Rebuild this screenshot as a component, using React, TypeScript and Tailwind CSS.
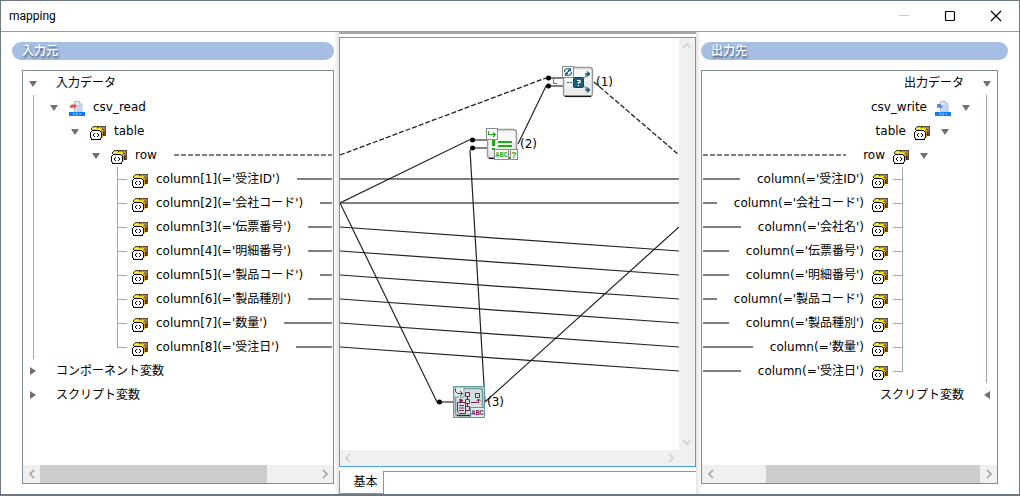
import type { ReactNode } from "react";

type Leaf = string;

const leftColumns: Leaf[] = [
  "column[1](='受注ID')",
  "column[2](='会社コード')",
  "column[3](='伝票番号')",
  "column[4](='明細番号')",
  "column[5](='製品コード')",
  "column[6](='製品種別')",
  "column[7](='数量')",
  "column[8](='受注日')",
];

const rightColumns: Leaf[] = [
  "column(='受注ID')",
  "column(='会社コード')",
  "column(='会社名')",
  "column(='伝票番号')",
  "column(='明細番号')",
  "column(='製品コード')",
  "column(='製品種別')",
  "column(='数量')",
  "column(='受注日')",
];

function FolderIcon() {
  return (
    <svg viewBox="0 0 16 15" className="h-[15px] w-4 shrink-0" shapeRendering="crispEdges" aria-hidden="true">
      <rect x="6" y="1" width="10" height="10" fill="#5f4b36" />
      <rect x="8" y="2" width="7" height="8" fill="#9c8b74" />
      <path d="M11 4h3v1h-3zM13 6h2v4h-2z" fill="#6d5030" />
      <path d="M1 3h1V2h1V1h4v1h1v1h3v2H1z" fill="#4a3d08" />
      <path d="M2 3h1V2h4v1h5v3H2z" fill="#ecd51c" />
      <path d="M3 3h3v1H3zM7 4h4v1H7z" fill="#fff48a" />
      <path d="M11 4h1v1h1v7h-1V6h-1z" fill="#d9a514" />
      <path d="M13 7h1v4h-1z" fill="#3a2604" />
      <path d="M2 5h8v1h1v1h1v6h-1v2H1v-2H0V7h1V6h1z" fill="#000" />
      <path d="M2 6h8v1h1v6h-1v1H2v-1H1V7h1z" fill="#fff" />
      <path d="M4 8h1v1H4zM3 9h1v2H3zM4 11h1v1H4zM7 8h1v1H7zM8 9h1v2H8zM7 11h1v1H7z" fill="#000" />
    </svg>
  );
}

function CsvIcon({ write }: { write?: boolean }) {
  return (
    <svg viewBox="0 0 16 15" className="h-[15px] w-4 shrink-0" aria-hidden="true">
      <path d="M5.500.5h5l2.500 2.500V11h-7.500z" fill="#dfe8f7" stroke="#a9bcd8" />
      <path d="M10.500.5v2.500h2.500" fill="#fff" stroke="#a9bcd8" />
      <path d="M8 5h4M8 7h4M7 9h5" stroke="#a8c0e2" />
      {write ? (
        <path d="M2 3h4v1.500h2L6.500 8 4 6.500 2 7z" fill="#5b8ccf" />
      ) : (
        <path d="M1 7V5l2-1.500h2V2.500L8 5 5 8V6.500z" fill="#d5564d" />
      )}
      <rect y="11" width="16" height="4" fill="#0a7bf2" />
      <path d="M6 12H4.500v2H6M8.500 12H7v1h1.500v1H7M10 12l1 2 1-2" fill="none" stroke="#a9d2ff" strokeWidth=".6" />
    </svg>
  );
}

function Toggle({ open, mirror, label }: { open: boolean; mirror: boolean; label: string }) {
  return (
    <button type="button" aria-label={label} aria-expanded={open} className="flex w-2 shrink-0 justify-center">
      {open ? (
        <svg viewBox="0 0 8 6" className="mt-0.5 h-1.5 w-2">
          <path d="M0 0h8L4 6z" fill="#707070" />
        </svg>
      ) : (
        <svg viewBox="0 0 6 8" className="h-2 w-1.5">
          <path d={mirror ? "M6 0v8L0 4z" : "M0 0v8l6-4z"} fill="#707070" />
        </svg>
      )}
    </button>
  );
}

function Row({
  label,
  indent,
  open = true,
  mirror,
  icon,
  dashed,
}: {
  label: string;
  indent: string;
  open?: boolean;
  mirror: boolean;
  icon?: ReactNode;
  dashed?: boolean;
}) {
  return (
    <div className={`flex h-6 items-center ${mirror ? "flex-row-reverse" : ""} ${indent}`}>
      <Toggle open={open} mirror={mirror} label={label} />
      {icon ? <span className="mx-[11px] mt-0.5 w-4 shrink-0">{icon}</span> : <span className="w-[19px] shrink-0" />}
      <span className={`whitespace-nowrap ${icon ? (mirror ? "-mr-[3px]" : "-ml-[3px]") : ""}`}>{label}</span>
      {dashed && (
        <span
          className={`h-0.5 flex-1 bg-[repeating-linear-gradient(90deg,#808080_0_5px,transparent_5px_7px)] ${
            mirror ? "mr-[17px] ml-px" : "mr-px ml-[17px]"
          }`}
        />
      )}
    </div>
  );
}

function LeafRow({ label, last, mirror }: { label: string; last: boolean; mirror: boolean }) {
  const side = mirror ? "border-r" : "border-l";
  return (
    <li className={`flex h-6 items-center ${mirror ? "flex-row-reverse pr-[83px]" : "pl-[83px]"}`}>
      <span className="flex w-2.5 shrink-0 flex-col self-stretch">
        <span className={`h-[13px] border-b border-[#a0a8b4] ${side}`} />
        <span className={`flex-1 border-[#a0a8b4] ${last ? "" : side}`} />
      </span>
      <span className="mx-[5px] mt-0.5 shrink-0">
        <FolderIcon />
      </span>
      <span className={`whitespace-nowrap ${mirror ? "mr-[3px]" : "ml-[3px]"}`}>{label}</span>
      <span className={`h-0.5 flex-1 bg-[#808080] ${mirror ? "mr-[17px] ml-px" : "mr-px ml-[17px]"}`} />
    </li>
  );
}

function Tree({
  root,
  file,
  columns,
  others,
  mirror = false,
}: {
  root: string;
  file: string;
  columns: Leaf[];
  others: string[];
  mirror?: boolean;
}) {
  return (
    <ul className="flex-1">
      <li>
        <Row label={root} indent={mirror ? "pr-1.5" : "pl-1.5"} mirror={mirror} />
        <div className={`border-[#a0a8b4] ${mirror ? "mr-2.5 border-r" : "ml-2.5 border-l"}`}>
          <Row label={file} indent={mirror ? "pr-4" : "pl-4"} mirror={mirror} icon={<CsvIcon write={mirror} />} />
          <Row label="table" indent={mirror ? "pr-[37px]" : "pl-[37px]"} mirror={mirror} icon={<FolderIcon />} />
          <Row label="row" indent={mirror ? "pr-[58px]" : "pl-[58px]"} mirror={mirror} icon={<FolderIcon />} dashed />
          <ul>
            {columns.map((c, i) => (
              <LeafRow key={c} label={c} last={i === columns.length - 1} mirror={mirror} />
            ))}
          </ul>
        </div>
      </li>
      {others.map((o) => (
        <li key={o}>
          <Row label={o} indent={mirror ? "pr-1.5" : "pl-1.5"} open={false} mirror={mirror} />
        </li>
      ))}
    </ul>
  );
}

function Chevron({ d, label, className }: { d: string; label: string; className: string }) {
  return (
    <button type="button" aria-label={label} className={`flex shrink-0 items-center justify-center ${className}`}>
      <svg viewBox="0 0 10 10" className="size-2.5">
        <path d={d} fill="none" stroke="currentColor" strokeWidth="1.6" />
      </svg>
    </button>
  );
}

const LEFT = "M7 1L3 5l4 4";
const RIGHT = "M3 1l4 4-4 4";
const UP = "M1 7l4-4 4 4";
const DOWN = "M1 3l4 4 4-4";

function TreeScroll({ parts }: { parts: string[] }) {
  return (
    <div className="flex h-[18px] bg-[#f0f0f0] text-[#a3a3a3]">
      <Chevron d={LEFT} label="左へスクロール" className="w-[17px]" />
      <div className={parts[0]} />
      <div className={`bg-[#cdcdcd] ${parts[1]}`} />
      <div className={parts[2]} />
      <Chevron d={RIGHT} label="右へスクロール" className="w-[17px]" />
    </div>
  );
}

function PanelTitle({ children }: { children: ReactNode }) {
  return (
    <h2 className="h-[18px] rounded-full bg-[#a5bee1] pl-2.5 text-[12px] leading-[18px] font-medium text-white [text-shadow:1px_2px_2px_#4a5a70]">
      {children}
    </h2>
  );
}

function NodeFrame() {
  return (
    <>
      <rect x="1.500" y="1.500" width="29" height="29" rx="3" fill="#ececec" stroke="#9a9a9a" strokeWidth="1.400" />
      <path d="M3 4h26v10Q16 18 3 22z" fill="#f7f7f7" />
      <path d="M3 30.300h26" stroke="#111" strokeWidth="1.300" />
    </>
  );
}

function BranchIcon() {
  return (
    <svg viewBox="0 0 32 32" className="size-8">
      <NodeFrame />
      <path d="M5 16.500h7M21 13l5-5M21 19l5 5" stroke="#1f5f7d" strokeWidth="1.200" strokeDasharray="2 1" />
      <path d="M23 8h4M25 5.500L27.500 8 25 10.500M23 24h4M25 21.500l2.500 2.500-2.500 2.500" fill="none" stroke="#1f5f7d" strokeWidth="1.400" />
      <rect x="11.500" y="11.500" width="10" height="10" rx="1" fill="#1f5f7d" stroke="#134358" />
      <path d="M15 14.500h3v2h-1.500v1.500M16.500 19v1.200" fill="none" stroke="#fff" strokeWidth="1.200" />
      <rect x=".5" y=".5" width="11" height="11" fill="#fff" stroke="#8a8a8a" />
      <path d="M2.500 6q0-3.500 4-3.500L8 4M9.500 6q0 3.500-4 3.500L4 8M8.500 2v2.500H6M3.500 10V7.500H6M4 7l4-2.500" fill="none" stroke="#1f5f7d" strokeWidth="1.200" />
    </svg>
  );
}

function EqualsIcon() {
  return (
    <svg viewBox="0 0 32 32" className="size-8">
      <NodeFrame />
      <g fill="#1fae12">
        <rect x="6" y="12" width="3" height="6" />
        <rect x="6" y="20" width="3" height="2" />
        <rect x="12" y="13" width="14" height="2" />
        <rect x="12" y="17" width="14" height="2" />
      </g>
      <rect x=".5" y=".5" width="11" height="11" fill="#fff" stroke="#8a8a8a" />
      <path d="M2.500 3v3.500H9M7 4.500l2.500 2L7 9" fill="none" stroke="#1fae12" strokeWidth="1.200" />
      <rect x="8.500" y="21.500" width="14" height="10" fill="#fff" stroke="#8a8a8a" />
      <rect x="24.500" y="21.500" width="7" height="10" fill="#fff" stroke="#8a8a8a" />
      <g fill="#1fae12" fontFamily="Liberation Mono, monospace" fontWeight="700" textAnchor="middle">
        <text x="15.500" y="29" fontSize="7">ABC</text>
        <text x="28" y="30" fontSize="9">?</text>
      </g>
    </svg>
  );
}

function LookupIcon() {
  return (
    <svg viewBox="0 0 32 32" className="size-8">
      <rect x=".5" y=".5" width="31" height="31" fill="#c3d8d6" stroke="#5c9c9e" />
      <rect x="2.500" y="2.500" width="27" height="27" rx="3" fill="#d3e1df" stroke="#7f9998" strokeWidth="1.500" />
      <path d="M4 29.500h14" stroke="#1c3030" strokeWidth="1.300" />
      <rect x="1" y="1" width="10" height="10" fill="#e2eeed" stroke="#7fabab" />
      <g fill="none" stroke="#7a2058" strokeWidth="1">
        <path d="M2.500 2.500v3l2 2H9M7 5l2.500 2.500L7 10" />
        <path d="M12.500 6.500h4v4h-4zM12.500 13.500h4v4h-4zM12.500 20.500h4v4h-4zM14.500 11v2M14.500 18v2" />
        <path d="M22.500 7.500h4v4h-4zM18 16.500h7.500V13M23.500 15l2-2 2 2" />
        <path d="M4.500 16.500h8v11h-6l-2-2zM6 19.500h5M6 22h5M6 24.500h5" />
        <path d="M7 13v3l3-1.500z" fill="#7a2058" />
      </g>
      <rect x="17.500" y="21.500" width="14" height="10" fill="#e2eeed" stroke="#5c9c9e" />
      <text x="24.500" y="29" fontSize="7" fontWeight="700" textAnchor="middle" fill="#7a2058" fontFamily="Liberation Mono, monospace">
        ABC
      </text>
    </svg>
  );
}

function Node({ place, label, children }: { place: string; label: string; children: ReactNode }) {
  return (
    <button type="button" className={`absolute flex items-center gap-0.5 ${place}`}>
      {children}
      <span>{label}</span>
    </button>
  );
}

function Links() {
  return (
    <svg viewBox="340 38 339 412" className="absolute top-0 left-0 h-[412px] w-[339px]" fill="none" aria-hidden="true">
      <path d="M340 179h339M340 203h339" stroke="#808080" strokeWidth="2" />
      <path
        d="M340 227l339 24M340 251l339 24M340 275l339 24M340 299l339 24M340 323l339 24M340 347l339 24"
        stroke="#222"
        strokeWidth="1.200"
      />
      <path
        d="M340 203L469 140H472M340 203L437 402H440M485 402L470 150M518 144L546 86H548M485 402L679 227"
        stroke="#222"
        strokeWidth="1.200"
      />
      <path d="M340 155L546 78M594 82L679 155" stroke="#222" strokeWidth="1.300" strokeDasharray="5 2" />
      <path d="M548 78h15M548 86h15M472 140h15M472 148h15M440 402h14" stroke="#808080" strokeWidth="2" />
      <path d="M553.500 79v4.500h3.500" stroke="#2f7fb5" />
      <g fill="#000">
        <circle cx="548.500" cy="78" r="2.500" />
        <circle cx="548.500" cy="86" r="2.500" />
        <circle cx="472.500" cy="140" r="2.500" />
        <circle cx="472.500" cy="148" r="2.500" />
        <circle cx="439.500" cy="402" r="2.500" />
      </g>
    </svg>
  );
}

export default function App() {
  return (
    <div className="flex min-h-screen flex-col border border-b-2 border-[#6f7780] bg-white font-['DejaVu_Sans','Noto_Sans_CJK_JP',sans-serif] text-[12px] leading-4 text-black">
      <header className="flex h-[31px] items-center border-b border-[#999] pl-2">
        <h1 className="flex-1 font-[Roboto,sans-serif] text-[12px]">mapping</h1>
        <button type="button" aria-label="最小化" className="flex h-full w-[46px] items-center justify-center">
          <svg viewBox="0 0 12 12" className="size-3">
            <path d="M1 5.500h10" stroke="#ccc" />
          </svg>
        </button>
        <button type="button" aria-label="最大化" className="flex h-full w-[46px] items-center justify-center">
          <svg viewBox="0 0 12 12" className="size-3">
            <rect x="1.500" y="1.500" width="9" height="9" rx="1" fill="none" stroke="#000" strokeWidth="1.200" />
          </svg>
        </button>
        <button type="button" aria-label="閉じる" className="flex h-full w-[46px] items-center justify-center">
          <svg viewBox="0 0 12 12" className="size-3">
            <path d="M1 1l10 10M11 1L1 11" stroke="#000" strokeWidth="1.200" />
          </svg>
        </button>
      </header>

      <main className="grid flex-1 grid-cols-[minmax(0,338fr)_357px_minmax(0,323fr)]">
        <section className="flex">
          <div className="flex min-w-0 flex-1 flex-col gap-2.5 py-2.5 pl-[11px]">
            <PanelTitle>入力元</PanelTitle>
            <div className="ml-2.5 flex flex-1 flex-col border border-[#7f8b99]">
              <Tree root="入力データ" file="csv_read" columns={leftColumns} others={["コンポーネント変数", "スクリプト変数"]} />
              <TreeScroll parts={["w-0", "flex-[227]", "flex-[49]"]} />
            </div>
          </div>
          <div className="w-[5px] bg-linear-to-r from-white to-[#e4e4e4]" />
        </section>

        <section className="flex flex-col border-t-2 border-[#a5a8ad] pt-[3px]">
          <div className="flex flex-1 flex-col border border-[#4ba0ee]">
            <div className="flex flex-1">
              <div className="relative flex-1 overflow-hidden">
                <Links />
                <Node place="top-7 left-[222px]" label="(1)">
                  <BranchIcon />
                </Node>
                <Node place="top-[90px] left-[146px]" label="(2)">
                  <EqualsIcon />
                </Node>
                <Node place="top-[348px] left-[113px]" label="(3)">
                  <LookupIcon />
                </Node>
              </div>
              <div className="flex w-4 flex-col justify-between bg-[#f0f0f0] text-[#cfcfcf]">
                <Chevron d={UP} label="上へスクロール" className="h-4" />
                <Chevron d={DOWN} label="下へスクロール" className="h-4" />
              </div>
            </div>
            <div className="flex h-4 justify-between bg-[#f0f0f0] pr-4 text-[#cfcfcf]">
              <Chevron d={LEFT} label="左へスクロール" className="w-4" />
              <Chevron d={RIGHT} label="右へスクロール" className="w-4" />
            </div>
          </div>
          <div className="mt-1 flex h-[23px]" role="tablist">
            <button type="button" role="tab" aria-selected="true" className="w-[45px] border-x border-b border-[#8f959c] pl-2 text-center">
              基本
            </button>
            <div className="flex-1 border-t border-[#8f959c]" />
          </div>
        </section>

        <section className="flex">
          <div className="w-[5px] bg-linear-to-r from-[#e4e4e4] to-white" />
          <div className="flex min-w-0 flex-1 flex-col gap-2.5 py-2.5 pr-[11px]">
            <PanelTitle>出力先</PanelTitle>
            <div className="mr-2.5 flex flex-1 flex-col border border-[#7f8b99]">
              <Tree root="出力データ" file="csv_write" columns={rightColumns} others={["スクリプト変数"]} mirror />
              <TreeScroll parts={["flex-[47]", "flex-[214]", "w-0"]} />
            </div>
          </div>
        </section>
      </main>
    </div>
  );
}
